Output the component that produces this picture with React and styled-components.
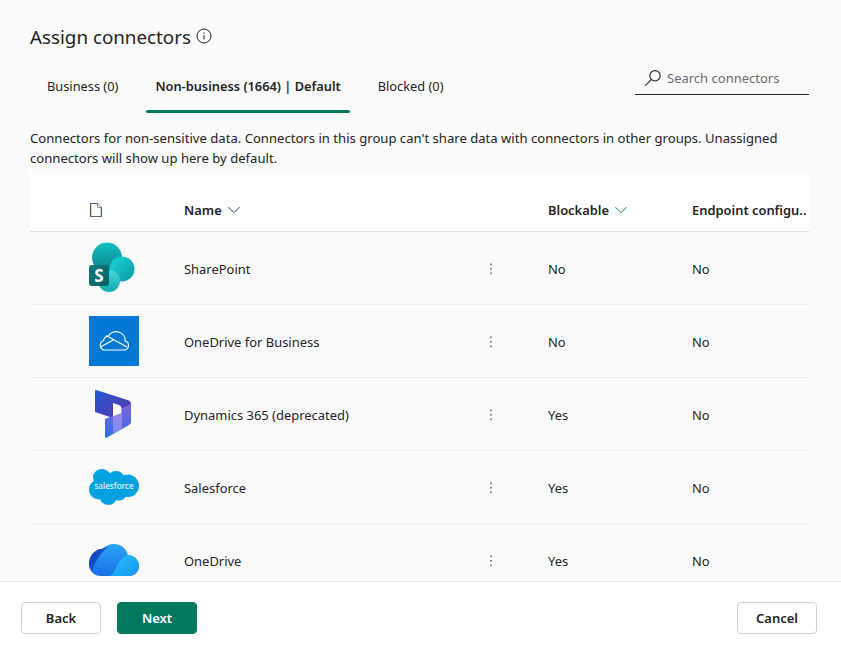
import React from "react";
import styled, { createGlobalStyle } from "styled-components";

const Global = createGlobalStyle`
  html, body { margin: 0; padding: 0; height: 100%; overflow: hidden; }
  body { font-family: "Noto Sans", "Open Sans", sans-serif; color: #242424; background: #fafafa; }
`;
const Page = styled.div`
  width: 841px; height: 653px; display: flex; flex-direction: column; background: #fafafa; overflow: hidden;
`;
const Main = styled.main`
  flex: 1; min-height: 0; overflow: hidden; padding: 24px 32px 0 30px; display: flex; flex-direction: column;
`;
const TitleRow = styled.div`
  display: flex; align-items: center; gap: 5px; height: 26px;
`;
const Title = styled.h1`
  margin: 0; font-size: 18.8px; font-weight: 400; line-height: 26px; color: #242424;
`;
const TabBar = styled.div`
  display: flex; justify-content: space-between; align-items: flex-start; margin-top: 20px; height: 58px; flex: none;
`;
const Tabs = styled.div`
  display: flex; gap: 19px; margin-left: 8px;
`;
const Tab = styled.div`
  position: relative; height: 36px; padding: 0 9px; line-height: 32px; box-sizing: border-box;
  font-size: 12.8px; font-weight: ${p => (p.$active ? 600 : 400)}; white-space: nowrap;
  ${p => p.$active && `
    &::after { content: ""; position: absolute; left: 0; right: 0; bottom: -7px; height: 3px; border-radius: 2px; background: #03785f; }
  `}
`;
const Search = styled.div`
  width: 174px; height: 31px; box-sizing: border-box; border-bottom: 1px solid #242424; margin-top: -6px;
  display: flex; align-items: center; gap: 5px; padding: 0 0 3px 9px; font-size: 13px; color: #6e6e6e;
`;
const Desc = styled.p`
  margin: 0; font-size: 13.1px; line-height: 20px; width: 779px; color: #242424; flex: none;
`;
const Table = styled.div`
  margin-top: 4px; width: 779px;
`;
const grid = `display: grid; grid-template-columns: 59px 95px 301px 63px 144px 117px; align-items: center;`;
const HeadRow = styled.div`
  ${grid} height: 60px; box-sizing: border-box; background: #fff; border-bottom: 1px solid #e0e0e0; padding-top: 17px;
  font-size: 12.9px; font-weight: 600; white-space: nowrap;
`;
const HeadCell = styled.div`
  grid-column: ${p => p.$col}; display: flex; align-items: center; gap: 5px; overflow: hidden;
`;
const Row = styled.div`
  ${grid} height: 73px; box-sizing: border-box; padding-top: 2px; border-bottom: 1px solid #f0f0f0; font-size: 12.95px;
`;
const Cell = styled.div`
  grid-column: ${p => p.$col}; white-space: nowrap; display: flex; align-items: center;
`;
const IconCell = styled(Cell)`
  margin-top: -2px;
`;
const Footer = styled.footer`
  height: 72px; flex: none; box-sizing: border-box; background: #fff; border-top: 1px solid #e5e5e5;
  display: flex; align-items: flex-start; padding: 20px 24px 0 21px; gap: 16px;
`;
const Button = styled.button`
  width: 80px; height: 32px; box-sizing: border-box; border-radius: 4px; font: 600 13px "Noto Sans", sans-serif;
  cursor: pointer; padding: 0;
  background: ${p => (p.$primary ? "#03785f" : "#fff")};
  color: ${p => (p.$primary ? "#fff" : "#242424")};
  border: 1px solid ${p => (p.$primary ? "#03785f" : "#d1d1d1")};
  ${p => p.$push && "margin-left: auto;"}
`;

const Info = () => (
  <svg width="16" height="16" viewBox="0 0 16 16" fill="none" stroke="#242424" style={{ marginTop: -3 }}>
    <circle cx="8" cy="8" r="7" strokeWidth="1" />
    <path d="M8 7.2v4.300" strokeWidth="1" />
    <circle cx="8" cy="5" r=".7" fill="#242424" stroke="none" />
  </svg>
);
const SearchIcon = () => (
  <svg width="18" height="18" viewBox="0 0 18 18" fill="none" stroke="#242424" strokeWidth="1.1">
    <circle cx="11" cy="6.8" r="5.2" />
    <path d="M7.2 10.6 1.6 16.3" strokeLinecap="round" />
  </svg>
);
const Chevron = ({ color }) => (
  <svg width="14" height="10" viewBox="0 0 14 10" fill="none" stroke={color} strokeWidth="1">
    <path d="M1.5 2.2 7 7.700l5.500-5.500" />
  </svg>
);
const DocIcon = () => (
  <svg width="14" height="16" viewBox="0 0 14 16" fill="none">
    <path d="M1.5 1.5h7l4 4v9h-11z" fill="#fff" stroke="#5d5a58" strokeWidth="1.1" />
    <path d="M8.5 1.5v4h4" stroke="#8a8886" strokeWidth=".9" fill="#eef5fc" />
    <path d="M2.5 3v11" stroke="#e8a86b" strokeWidth=".6" />
    <path d="M11.500 6.500v7" stroke="#8fc0ea" strokeWidth=".6" />
  </svg>
);
const Kebab = () => (
  <svg width="12" height="14" viewBox="0 0 12 14" fill="#555">
    <rect x="5.2" y="1.5" width="1.4" height="1.6" />
    <rect x="5.2" y="6" width="1.4" height="1.6" />
    <rect x="5.2" y="10.5" width="1.4" height="1.6" />
  </svg>
);

const SharePoint = () => (
  <svg width="50" height="52" viewBox="0 0 50 52">
    <defs>
      <linearGradient id="sp1" x1="0" y1="0" x2="0" y2="1"><stop offset="0" stopColor="#18c0c4" /><stop offset="1" stopColor="#037f86" /></linearGradient>
      <linearGradient id="sp2" x1="0" y1="0" x2="1" y2="1"><stop offset="0" stopColor="#1ad8d8" /><stop offset="1" stopColor="#0a98a0" /></linearGradient>
      <linearGradient id="sp3" x1="0" y1="0" x2="0" y2="1"><stop offset="0" stopColor="#45d8d8" /><stop offset="1" stopColor="#0faab0" /></linearGradient>
      <linearGradient id="sp4" x1="0" y1="0" x2="1" y2="1"><stop offset="0" stopColor="#0b7c80" /><stop offset="1" stopColor="#065f63" /></linearGradient>
    </defs>
    <circle cx="18" cy="15.500" r="15" fill="url(#sp1)" />
    <circle cx="33" cy="27" r="12.5" fill="url(#sp2)" />
    <circle cx="20" cy="39" r="11" fill="url(#sp3)" />
    <rect x="0" y="23" width="20" height="21" rx="3" fill="url(#sp4)" />
    <text x="10" y="39.5" textAnchor="middle" fontFamily="'Noto Sans', sans-serif" fontSize="17" fontWeight="700" fill="#fff">S</text>
  </svg>
);
const OneDriveBiz = () => (
  <svg width="50" height="50" viewBox="0 0 50 50">
    <rect width="50" height="50" fill="#0078d4" />
    <path d="M15 34H35a4.600 4.600 0 0 0 1.200-9A9 9 0 0 0 19.500 20A6 6 0 0 0 14.500 24.500A5 5 0 0 0 15 34Z" fill="none" stroke="#fff" strokeWidth="1.2" strokeLinejoin="round" />
    <path d="M11.500 31 25 23.500M17 19.500 38 31" fill="none" stroke="#fff" strokeWidth="1.2" />
  </svg>
);
const Dynamics = () => (
  <svg width="50" height="52" viewBox="-5 0 50 52">
    <defs>
      <linearGradient id="dy1" x1="0" y1="0" x2="1" y2="1"><stop offset="0" stopColor="#2458d0" /><stop offset="1" stopColor="#5a35a8" /></linearGradient>
      <linearGradient id="dy2" x1="0" y1="0" x2="0" y2="1"><stop offset="0" stopColor="#7d62dc" /><stop offset="1" stopColor="#2f70e6" /></linearGradient>
    </defs>
    <path d="M1 3.500Q1 1.500 3 2.200L35 12.500Q37 13.500 37 16V22L19 30 1 24Z" fill="url(#dy1)" />
    <path d="M37 16V34Q37 36 35 37L13 49.500Q11 50.500 11 48.500V31L28 24V20Z" fill="url(#dy2)" />
    <path d="M19 29 28 25V41L19 46Z" fill="#b0a2f0" opacity=".6" />
    <path d="M19 15 25 17Q27.500 18 27.500 20V25L19 28.500Z" fill="#fafafa" />
  </svg>
);
const Salesforce = () => (
  <svg width="50" height="36" viewBox="0 0 50 36">
    <path d="M21 4.200A8.500 8.500 0 0 1 27 2a8.800 8.800 0 0 1 7.500 4.300A10.500 10.500 0 0 1 39 5.400c6 0 11 5 11 11.300S45 28 39 28a10 10 0 0 1-2.200-.2 7.500 7.500 0 0 1-9.700 3.100A8.800 8.800 0 0 1 11 30.300a7.500 7.500 0 0 1-1.500.1C4.300 30.400 0 26 0 20.600c0-3.700 2-6.900 4.900-8.500A9.700 9.700 0 0 1 4 8.300C4 3.700 8 0 12.800 0c3.300 0 6.500 1.700 8.200 4.200z" fill="#05a1e0" />
    <text x="25" y="19.500" textAnchor="middle" fontFamily="'Noto Sans', sans-serif" fontSize="8.300" fill="#fff">salesforce</text>
  </svg>
);
const OneDrive = () => (
  <svg width="50" height="34" viewBox="0 0 50 34">
    <defs>
      <linearGradient id="od1" x1="0" y1="0" x2="0" y2="1"><stop offset="0" stopColor="#2aa5f5" /><stop offset="1" stopColor="#1c6fe6" /></linearGradient>
      <linearGradient id="od2" x1="0" y1="0" x2="1" y2="1"><stop offset="0" stopColor="#28c4fa" /><stop offset="1" stopColor="#1596f2" /></linearGradient>
      <linearGradient id="od3" x1="0" y1="0" x2="1" y2="1"><stop offset="0" stopColor="#0c3ab4" /><stop offset="1" stopColor="#2467d8" /></linearGradient>
    </defs>
    <path d="M12 33C4 33 0 27 0 21C0 13 6 6 13 6C16 3 20 1 25 1C32 1 37 5 39 12C45 12 50 17 50 23C50 29 45 33 40 33Z" fill="url(#od1)" />
    <path d="M13 6C6 6 0 13 0 21C0 24 1 26 3 28C6 20 10 11 19 4C17 4 15 5 13 6Z" fill="url(#od3)" />
    <path d="M19 33C24 33 25 28 28 23C31 17 35 13 39 12C45 12 50 17 50 23C50 29 45 33 40 33Z" fill="url(#od2)" />
  </svg>
);

const rows = [
  { name: "SharePoint", icon: <SharePoint />, blockable: "No" },
  { name: "OneDrive for Business", icon: <OneDriveBiz />, blockable: "No" },
  { name: "Dynamics 365 (deprecated)", icon: <Dynamics />, blockable: "Yes" },
  { name: "Salesforce", icon: <Salesforce />, blockable: "Yes" },
  { name: "OneDrive", icon: <OneDrive />, blockable: "Yes" },
];

export default function App() {
  return (
    <Page>
      <Global />
      <Main>
        <TitleRow>
          <Title>Assign connectors</Title>
          <Info />
        </TitleRow>
        <TabBar>
          <Tabs>
            <Tab>Business (0)</Tab>
            <Tab $active>Non-business (1664) | Default</Tab>
            <Tab>Blocked (0)</Tab>
          </Tabs>
          <Search><SearchIcon />Search connectors</Search>
        </TabBar>
        <Desc>
          Connectors for non-sensitive data. Connectors in this group can't share data with connectors in other groups. Unassigned connectors will show up here by default.
        </Desc>
        <Table>
          <HeadRow>
            <HeadCell $col={2}><DocIcon /></HeadCell>
            <HeadCell $col={3}>Name <Chevron color="#23466f" /></HeadCell>
            <HeadCell $col={5}>Blockable <Chevron color="#117865" /></HeadCell>
            <HeadCell $col={6}>Endpoint configu..</HeadCell>
          </HeadRow>
          {rows.map(r => (
            <Row key={r.name}>
              <IconCell $col={2}>{r.icon}</IconCell>
              <Cell $col={3}>{r.name}</Cell>
              <Cell $col={4}><Kebab /></Cell>
              <Cell $col={5}>{r.blockable}</Cell>
              <Cell $col={6}>No</Cell>
            </Row>
          ))}
        </Table>
      </Main>
      <Footer>
        <Button>Back</Button>
        <Button $primary>Next</Button>
        <Button $push>Cancel</Button>
      </Footer>
    </Page>
  );
}
